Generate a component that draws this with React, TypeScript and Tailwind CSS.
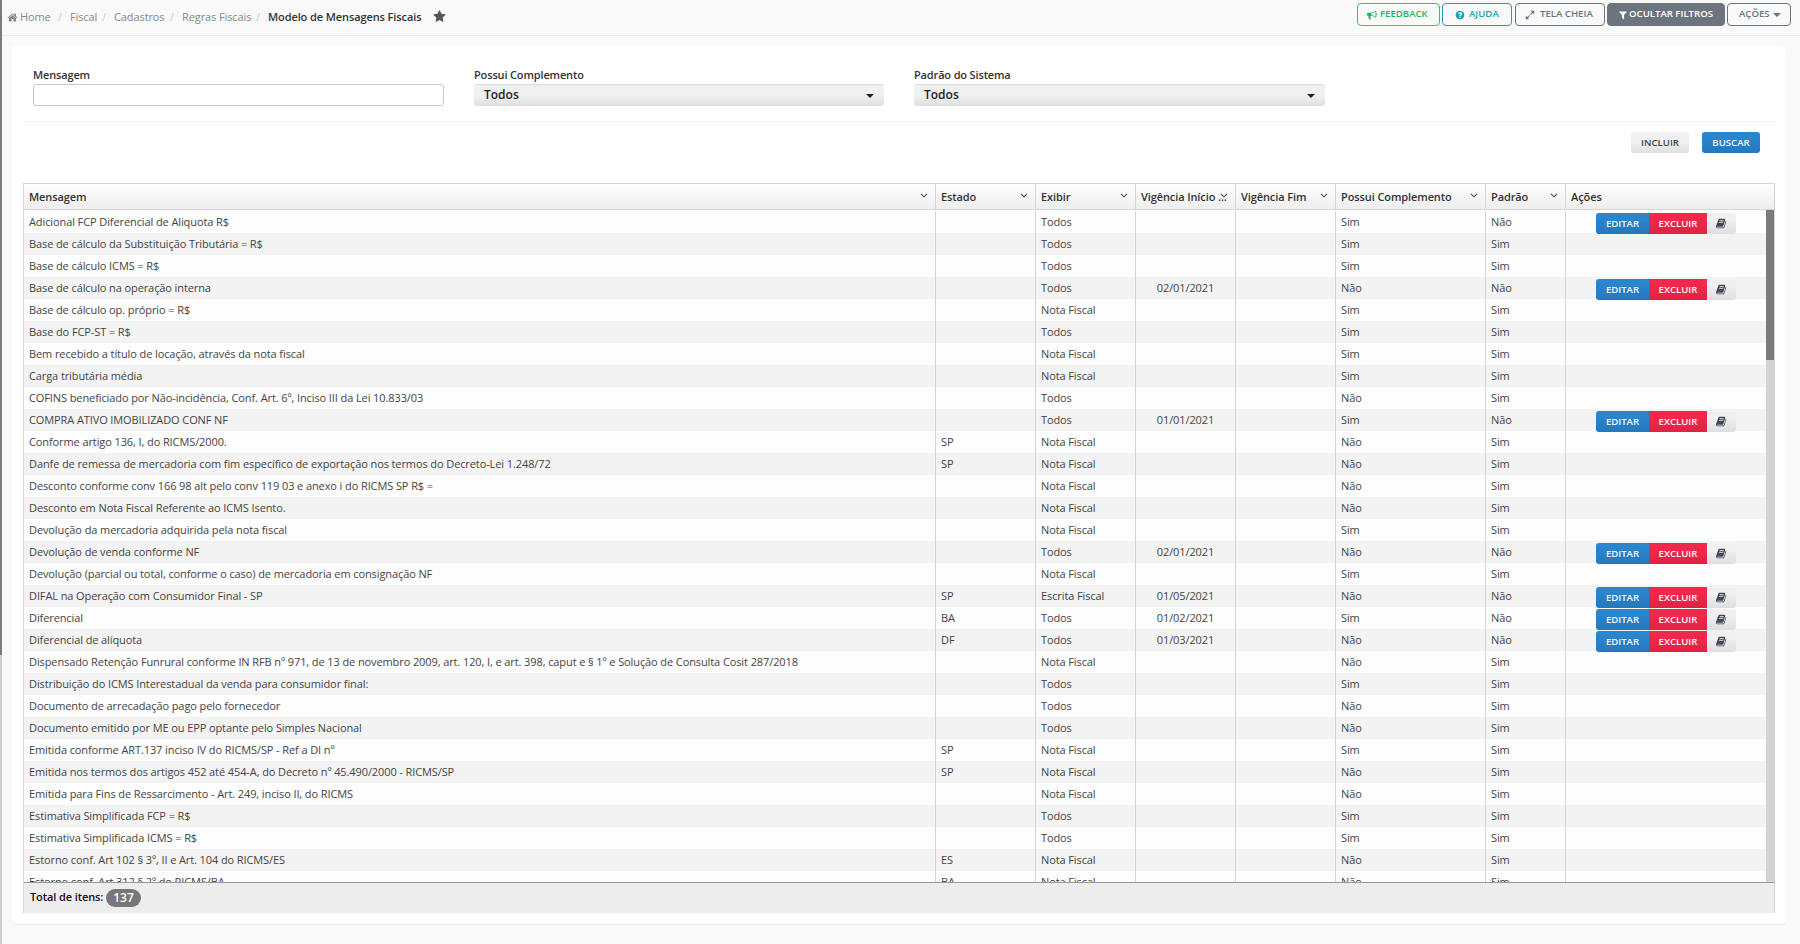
import type { ReactNode } from "react";

type Row = {
  message: string;
  state?: string;
  show: string;
  start?: string;
  complement: boolean;
  standard: boolean;
};

function row(message: string, state: string, show: string, start: string, complement: boolean, standard = true): Row {
  return { message, state, show, start, complement, standard };
}

const ALL = "Todos";
const NF = "Nota Fiscal";

const rows: Row[] = [
  row("Adicional FCP Diferencial de Aliquota R$", "", ALL, "", true, false),
  row("Base de cálculo da Substituição Tributária = R$", "", ALL, "", true),
  row("Base de cálculo ICMS = R$", "", ALL, "", true),
  row("Base de cálculo na operação interna", "", ALL, "02/01/2021", false, false),
  row("Base de cálculo op. próprio = R$", "", NF, "", true),
  row("Base do FCP-ST = R$", "", ALL, "", true),
  row("Bem recebido a título de locação, através da nota fiscal", "", NF, "", true),
  row("Carga tributária média", "", NF, "", true),
  row("COFINS beneficiado por Não-incidência, Conf. Art. 6º, Inciso III da Lei 10.833/03", "", ALL, "", false),
  row("COMPRA ATIVO IMOBILIZADO CONF NF", "", ALL, "01/01/2021", true, false),
  row("Conforme artigo 136, I, do RICMS/2000.", "SP", NF, "", false),
  row("Danfe de remessa de mercadoria com fim específico de exportação nos termos do Decreto-Lei 1.248/72", "SP", NF, "", false),
  row("Desconto conforme conv 166 98 alt pelo conv 119 03 e anexo i do RICMS SP R$ =", "", NF, "", false),
  row("Desconto em Nota Fiscal Referente ao ICMS Isento.", "", NF, "", false),
  row("Devolução da mercadoria adquirida pela nota fiscal", "", NF, "", true),
  row("Devolução de venda conforme NF", "", ALL, "02/01/2021", false, false),
  row("Devolução (parcial ou total, conforme o caso) de mercadoria em consignação NF", "", NF, "", true),
  row("DIFAL na Operação com Consumidor Final - SP", "SP", "Escrita Fiscal", "01/05/2021", false, false),
  row("Diferencial", "BA", ALL, "01/02/2021", true, false),
  row("Diferencial de alíquota", "DF", ALL, "01/03/2021", false, false),
  row("Dispensado Retenção Funrural conforme IN RFB nº 971, de 13 de novembro 2009, art. 120, I, e art. 398, caput e § 1º e Solução de Consulta Cosit 287/2018", "", NF, "", false),
  row("Distribuição do ICMS Interestadual da venda para consumidor final:", "", ALL, "", true),
  row("Documento de arrecadação pago pelo fornecedor", "", ALL, "", false),
  row("Documento emitido por ME ou EPP optante pelo Simples Nacional", "", ALL, "", false),
  row("Emitida conforme ART.137 inciso IV do RICMS/SP - Ref a DI nº", "SP", NF, "", true),
  row("Emitida nos termos dos artigos 452 até 454-A, do Decreto nº 45.490/2000 - RICMS/SP", "SP", NF, "", false),
  row("Emitida para Fins de Ressarcimento - Art. 249, inciso II, do RICMS", "", NF, "", false),
  row("Estimativa Simplificada FCP = R$", "", ALL, "", true),
  row("Estimativa Simplificada ICMS = R$", "", ALL, "", true),
  row("Estorno conf. Art 102 § 3º, II e Art. 104 do RICMS/ES", "ES", NF, "", false),
  row("Estorno conf. Art 312 § 2º do RICMS/BA", "BA", NF, "", false),
];

const columns = [
  { label: "Mensagem", width: "w-[912px]", menu: true },
  { label: "Estado", width: "w-[100px]", menu: true },
  { label: "Exibir", width: "w-[100px]", menu: true },
  { label: "Vigência Início ...", width: "w-[100px]", menu: true },
  { label: "Vigência Fim", width: "w-[100px]", menu: true },
  { label: "Possui Complemento", width: "w-[150px]", menu: true },
  { label: "Padrão", width: "w-[80px]", menu: true },
  { label: "Ações", width: "flex-1", menu: false },
];

const icons = {
  home: "M1472 992v480q0 26-19 45t-45 19h-384v-384h-256v384h-384q-26 0-45-19t-19-45v-480q0-1 .5-3t.5-3l575-474 575 474q1 2 1 6zm223-69l-62 74q-8 9-21 11h-3q-13 0-21-7l-692-577-692 577q-12 8-24 7-13-2-21-11l-62-74q-8-10-7-23.5t11-21.5l719-599q32-26 76-26t76 26l244 204v-195q0-14 9-23t23-9h192q14 0 23 9t9 23v408l219 182q10 8 11 21.5t-7 23.5z",
  star: "M1728 647q0 22-26 48l-363 354 86 500q1 7 1 20 0 21-10.5 35.5t-30.5 14.5q-19 0-40-12l-449-236-449 236q-22 12-40 12-21 0-31.5-14.5t-10.5-35.5q0-6 2-20l86-500-364-354q-25-27-25-48 0-37 56-46l502-73 225-455q19-41 49-41t49 41l225 455 502 73q56 9 56 46z",
  bullhorn: "M1664 640q53 0 90.5 37.5t37.5 90.5-37.5 90.5-90.5 37.5v384q0 52-38 90t-90 38q-417-347-812-380-58 19-91 66t-31 100.5 40 92.5q-20 33-23 65.5t6 58 33.5 55 48 50 61.5 50.5q-29 58-111.5 83t-168.5 11.5-132-55.5q-7-23-29.5-87.5t-32-94.5-23-89-15-101 3.5-98.5 22-110.5h-122q-66 0-113-47t-47-113v-192q0-66 47-113t113-47h480q435 0 896-384 52 0 90 38t38 90v384zm-128 604v-954q-394 302-768 343v270q377 42 768 341z",
  question: "M1024 1376v-192q0-14-9-23t-23-9h-192q-14 0-23 9t-9 23v192q0 14 9 23t23 9h192q14 0 23-9t9-23zm256-672q0-88-55.5-163t-138.5-116-170-41q-243 0-371 213-15 24 8 42l132 100q7 6 19 6 16 0 25-12 53-68 86-92 34-24 86-24 48 0 85.5 26t37.5 59q0 38-20 61t-68 45q-63 28-115.5 86.5t-52.5 125.5v36q0 14 9 23t23 9h192q14 0 23-9t9-23q0-19 21.5-49.5t54.5-49.5q32-18 49-28.5t46-35 44.5-48 28-60.5 12.5-81zm384 192q0 209-103 385.5t-279.5 279.5-385.5 103-385.5-103-279.5-279.5-103-385.5 103-385.5 279.5-279.5 385.5-103 385.5 103 279.5 279.5 103 385.5z",
  expand: "M883 1056q0 13-10 23l-332 332 144 144q19 19 19 45t-19 45-45 19h-448q-26 0-45-19t-19-45v-448q0-26 19-45t45-19 45 19l144 144 332-332q10-10 23-10t23 10l114 114q10 10 10 23zm781-864v448q0 26-19 45t-45 19-45-19l-144-144-332 332q-10 10-23 10t-23-10l-114-114q-10-10-10-23t10-23l332-332-144-144q-19-19-19-45t19-45 45-19h448q26 0 45 19t19 45z",
  filter: "M1595 295q17 41-14 70l-493 493v742q0 42-39 59-13 5-25 5-27 0-45-19l-256-256q-19-19-19-45v-486l-493-493q-31-29-14-70 17-39 59-39h1280q42 0 59 39z",
  book: "M1639 478q40 57 18 129l-275 906q-19 64-76.5 107.5t-122.5 43.5h-923q-77 0-148.5-53.5t-99.5-131.5q-24-67-2-127 0-4 3-27t4-37q1-8-3-21.5t-3-19.5q2-11 8-21t16.5-23.5 16.5-23.5q23-38 45-91.5t30-91.5q3-10 .5-30t-.5-28q3-11 17-28t17-23q21-36 42-92t25-90q1-9-2.5-32t.5-28q4-13 22-30.5t22-22.5q19-26 42.5-84.5t27.5-96.5q1-8-3-25.5t-2-26.5q2-8 9-18t18-23 17-21q8-12 16.5-30.5t15-35 16-36 19.5-32 26.5-23.5 36-11.5 47.5 5.5l-1 3q38-9 51-9h761q74 0 114 56t18 130l-274 906q-36 119-71.5 153.5t-128.5 34.5h-869q-27 0-38 15-11 16-1 43 24 70 144 70h923q29 0 56-15.5t35-41.5l300-987q7-22 5-57 38 15 59 43zm-1064 2q-4 13 2 22.5t20 9.5h608q13 0 25.5-9.5t16.5-22.5l21-64q4-13-2-22.5t-20-9.5h-608q-13 0-25.5 9.5t-16.5 22.5zm-83 256q-4 13 2 22.5t20 9.5h608q13 0 25.5-9.5t16.5-22.5l21-64q4-13-2-22.5t-20-9.5h-608q-13 0-25.5 9.5t-16.5 22.5z",
};

function Icon({ name, className }: { name: keyof typeof icons; className: string }) {
  return (
    <svg className={`shrink-0 ${className}`} fill="currentColor" viewBox="0 0 1792 1792">
      <path d={icons[name]} />
    </svg>
  );
}

function Caret({ className }: { className: string }) {
  return (
    <svg className={`shrink-0 ${className}`} fill="currentColor" viewBox="0 0 8 4">
      <path d="M0 0h8L4 4z" />
    </svg>
  );
}

function Crumb({ children, className }: { children: ReactNode; className: string }) {
  return (
    <>
      <a className={`shrink-0 whitespace-nowrap ${className}`}>{children}</a>
      <span className="w-[12px] shrink-0 text-[#ccc]">/</span>
    </>
  );
}

function SelectField({ label, className }: { label: string; className: string }) {
  return (
    <div className={className}>
      <label className="block h-[18px] text-[11px] leading-[18px] font-semibold tracking-[-0.15px] text-[#333]">{label}</label>
      <button
        className="flex h-[22px] w-full items-center justify-between rounded-[3px] border-t border-[#dcdcdc] bg-linear-to-b from-[#f0f0f0] from-50% to-[#dfdfdf] pr-[10px] pl-[10px] text-[12px] leading-[20px] font-semibold text-[#222]"
        type="button"
      >
        <span className="-mt-px">Todos</span>
        <Caret className="h-[4px] w-[8px]" />
      </button>
    </div>
  );
}

function RowActions() {
  return (
    <div className="relative z-10 mt-[2px] ml-[30px] flex h-[21px] w-[140px] shrink-0 overflow-hidden rounded-[3px] text-[9.6px] leading-[22px] font-semibold tracking-normal">
      <button className="w-[53px] bg-linear-to-b from-[#2a85cd] from-30% to-[#2477bc] text-[#f2f8fd]" type="button">
        EDITAR
      </button>
      <button className="w-[58px] bg-linear-to-b from-[#f2274c] from-30% to-[#dd2345] text-[#fef3f5]" type="button">
        EXCLUIR
      </button>
      <button className="flex flex-1 items-center justify-center bg-linear-to-b from-[#f0f0f0] from-30% to-[#dfdfdf] text-[#3f4854]" type="button">
        <Icon className="size-[11px]" name="book" />
      </button>
    </div>
  );
}

const toolButton = "flex h-[23px] shrink-0 items-center rounded-[4px] border text-[9.6px] font-semibold whitespace-nowrap";

export default function App() {
  return (
    <div className="flex h-[944px] w-[1800px] overflow-hidden bg-[#f9f9f9] font-['Open_Sans',sans-serif] text-[#333]">
      <div className="flex w-[2px] shrink-0 flex-col">
        <div className="h-[655px] bg-[#7c7c7c]" />
        <div className="flex-1 bg-[#cfcfcf]" />
      </div>

      <div className="flex flex-1 flex-col">
        <header className="flex h-[36px] shrink-0 items-start justify-between border-b border-[#eaeaea]">
          <nav className="flex h-[34px] items-center pl-[5px] text-[11px] tracking-[-0.1px] text-[#888]">
            <Crumb className="flex w-[51px] items-center gap-[2px]">
              <Icon className="size-[11px]" name="home" />
              Home
            </Crumb>
            <Crumb className="w-[32px]">Fiscal</Crumb>
            <Crumb className="w-[56px]">Cadastros</Crumb>
            <Crumb className="w-[74px]">Regras Fiscais</Crumb>
            <span className="w-[153px] font-semibold whitespace-nowrap text-[#333]">Modelo de Mensagens Fiscais</span>
            <Icon className="-mt-[2px] ml-[12px] size-[13px] text-[#555]" name="star" />
          </nav>
          <div className="flex pt-[3px] pr-[9px]">
            <button className={`${toolButton} w-[83px] border-[#28c76f] pl-[9px] text-[#18b85b]`} type="button">
              <Icon className="mr-[3px] size-[10px]" name="bullhorn" />
              FEEDBACK
            </button>
            <button className={`${toolButton} ml-[2px] w-[70px] border-[#17a2b8] pl-[12px] text-[#17a2b8]`} type="button">
              <Icon className="mr-[4px] size-[10px]" name="question" />
              AJUDA
            </button>
            <button className={`${toolButton} ml-[3px] w-[90px] border-[#6c757d] pl-[9px] text-[#6c757d]`} type="button">
              <Icon className="mr-[5px] size-[10px]" name="expand" />
              TELA CHEIA
            </button>
            <button className={`${toolButton} ml-[2px] w-[118px] border-[#6c757d] bg-[#6c757d] pl-[10px] text-white`} type="button">
              <Icon className="mr-[1px] size-[10px]" name="filter" />
              OCULTAR FILTROS
            </button>
            <button className={`${toolButton} ml-[2px] w-[64px] border-[#6c757d] pl-[11px] text-[#6c757d]`} type="button">
              AÇÕES
              <Caret className="ml-[3px] h-[4px] w-[8px]" />
            </button>
          </div>
        </header>

        <main className="mt-[10px] mr-[14px] ml-[10px] flex h-[878px] shrink-0 flex-col rounded-[4px] bg-white px-[11px] shadow-[0_1px_0_#ebebeb]">
          <section className="flex h-[76px] shrink-0 border-b border-[#f0f0f7] pt-[20px] pl-[10px]">
            <div className="w-[411px]">
              <label className="block h-[18px] text-[11px] leading-[18px] font-semibold tracking-[-0.15px] text-[#333]">Mensagem</label>
              <input className="block h-[22px] w-full rounded-[3px] border border-[#c8c8c8] bg-white px-2 text-[12px]" type="text" />
            </div>
            <SelectField className="ml-[30px] w-[410px]" label="Possui Complemento" />
            <SelectField className="ml-[30px] w-[411px]" label="Padrão do Sistema" />
          </section>

          <div className="flex h-[61px] shrink-0 justify-end gap-[13px] pt-[10px] pr-[15px] text-[9.6px] leading-[22px] font-semibold">
            <button className="h-[21px] w-[58px] rounded-[3px] bg-linear-to-b from-[#f0f0f0] from-50% to-[#dfdfdf] text-[#444]" type="button">
              INCLUIR
            </button>
            <button className="h-[21px] w-[58px] rounded-[3px] bg-linear-to-b from-[#2a85cd] from-30% to-[#2477bc] text-[#f2f8fd]" type="button">
              BUSCAR
            </button>
          </div>

          <section className="flex h-[730px] shrink-0 flex-col border-x border-t border-[#d4d4d4]">
            <div className="flex h-[26px] shrink-0 border-b border-[#d4d4d4] bg-linear-to-b from-[#fefefe] to-[#eee]">
              {columns.map((column) => (
                <div
                  className={`flex items-center justify-between border-r border-[#d4d4d4] pr-[7px] pl-[5px] text-[11px] font-semibold tracking-[-0.1px] whitespace-nowrap last:border-r-0 ${column.width}`}
                  key={column.label}
                >
                  <span className="pt-px">{column.label}</span>
                  {column.menu ? (
                    <svg className="-mt-[2px] -ml-[8px] h-[5px] w-[8px] shrink-0" fill="none" viewBox="0 0 8 5">
                      <path d="M1 .8 4 3.8 7 .8" stroke="#444" strokeWidth="1.1" />
                    </svg>
                  ) : null}
                </div>
              ))}
            </div>

            <div className="flex h-[672px] shrink-0 overflow-hidden">
              <div className="flex-1 pt-px">
                {rows.map((item) => (
                  <div className="flex h-[22px] bg-[#fdfdfd] text-[11px] leading-[22px] tracking-[-0.1px] whitespace-nowrap text-[#444] even:bg-[#f3f3f3]" key={item.message}>
                    <div className="w-[912px] border-r border-[#d4d4d4] pl-[5px]">{item.message}</div>
                    <div className="w-[100px] border-r border-[#d4d4d4] pl-[5px]">{item.state}</div>
                    <div className="w-[100px] border-r border-[#d4d4d4] pl-[5px]">{item.show}</div>
                    <div className="w-[100px] border-r border-[#d4d4d4] text-center">{item.start}</div>
                    <div className="w-[100px] border-r border-[#d4d4d4]" />
                    <div className="w-[150px] border-r border-[#d4d4d4] pl-[5px]">{item.complement ? "Sim" : "Não"}</div>
                    <div className="w-[80px] border-r border-[#d4d4d4] pl-[5px]">{item.standard ? "Sim" : "Não"}</div>
                    <div className="flex flex-1">{item.standard ? null : <RowActions />}</div>
                  </div>
                ))}
              </div>
              <div className="w-[8px] shrink-0 bg-[#d4d4d4]">
                <div className="h-[150px] bg-[#7b7b7b]" />
              </div>
            </div>

            <footer className="flex flex-1 items-start border-t border-[#999] bg-[#ededed] pt-[6px] pl-[6px] text-[11px] font-semibold tracking-[-0.1px] text-[#111]">
              <span className="w-[73px] leading-[16px] whitespace-nowrap">Total de itens:</span>
              <span className="ml-[3px] h-[18px] w-[35px] rounded-full bg-[#777] text-center text-[12px] leading-[17px] tracking-normal text-white">137</span>
            </footer>
          </section>
        </main>
      </div>
    </div>
  );
}
